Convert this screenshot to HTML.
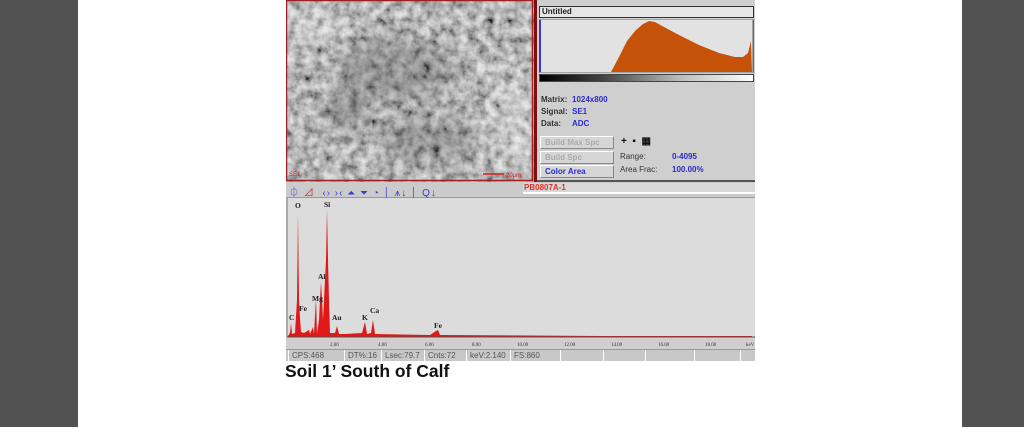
<!DOCTYPE html>
<html><head><meta charset="utf-8"><style>
*{margin:0;padding:0;box-sizing:border-box}
body{width:1024px;height:427px;background:#fff;position:relative;overflow:hidden;font-family:"Liberation Sans",Arial,sans-serif}
.side{position:absolute;top:0;height:427px;background:#525252}
.a{position:absolute}
.lbl{font-size:8px;font-weight:bold;color:#333;position:absolute}
.val{font-size:8px;font-weight:bold;color:#2b2bd0;position:absolute}
.btn{position:absolute;left:540px;width:74px;height:13px;background:#d6d6d6;border:1px solid #fff;border-right-color:#888;border-bottom-color:#888;font-size:8px;font-weight:bold;color:#aaa;padding-left:4px;line-height:11px}
.st{position:absolute;top:350px;height:11px;font-size:8px;color:#555;border-left:1px solid #fff;padding-left:3px;line-height:11px}
</style></head><body>
<div class="side" style="left:0;width:78px"></div>
<div class="side" style="left:962px;width:62px"></div>

<div class="a" style="left:286px;top:0;width:469px;height:361px;background:#cfcfcf"></div>

<svg class="a" style="left:286px;top:0" width="248" height="182" viewBox="0 0 248 182">
<defs>
<filter id="t2" x="0" y="0" width="100%" height="100%">
<feTurbulence type="fractalNoise" baseFrequency="0.11" numOctaves="5" seed="3"/>
<feColorMatrix type="matrix" values="1.5 0 0 0 -0.2 1.5 0 0 0 -0.2 1.5 0 0 0 -0.2 0 0 0 0 1"/>
</filter>
<filter id="b"><feGaussianBlur stdDeviation="10"/></filter>
</defs>
<rect width="248" height="182" fill="#8e8e8e"/>
<rect width="248" height="182" filter="url(#t2)" opacity="0.75"/>
<g filter="url(#b)" fill="#444" opacity="0.3">
<ellipse cx="110" cy="70" rx="60" ry="30"/><ellipse cx="140" cy="140" rx="50" ry="22"/><ellipse cx="60" cy="110" rx="25" ry="20"/>
</g>
<g filter="url(#b)" fill="#fff" opacity="0.3">
<ellipse cx="225" cy="120" rx="20" ry="50"/><ellipse cx="30" cy="30" rx="25" ry="18"/>
</g>
<rect x="0.5" y="0.5" width="246" height="180" fill="none" stroke="#a02020" stroke-width="1.5"/>
<text x="3" y="176" font-size="6" fill="#d02020" font-family="Liberation Sans">SE1</text>
<line x1="197" y1="174" x2="218" y2="174" stroke="#d02020" stroke-width="1.5"/>
<text x="220" y="177" font-size="6" fill="#d02020" font-family="Liberation Sans">20μm</text>
</svg>
<div class="a" style="left:534px;top:0;width:3px;height:182px;background:#7a1010"></div>

<div class="a" style="left:539px;top:6px;width:215px;height:12px;background:#e6e6e6;border:1px solid #333;font-size:8px;font-weight:bold;padding-left:2px;line-height:10px;color:#222">Untitled</div>
<svg class="a" style="left:539px;top:19px" width="215" height="54" viewBox="0 0 215 54">
<rect width="215" height="54" fill="#e2e2e2" stroke="#666"/>
<line x1="1" y1="1" x2="1" y2="53" stroke="#3a3ad0" stroke-width="2"/>
<path d="M72 53 L80 38 L88 22 L96 12 L104 5 L110 2 L116 3 L125 8 L140 16 L160 26 L180 34 L196 38 L204 38 L209 34 L212 22 L213 53 Z" fill="#c65209"/>
<line x1="214" y1="1" x2="214" y2="53" stroke="#666"/>
</svg>
<div class="a" style="left:539px;top:74px;width:215px;height:8px;border:1px solid #444;background:linear-gradient(90deg,#000,#444 30%,#bbb 65%,#fff)"></div>
<div class="lbl" style="left:541px;top:95px">Matrix:</div><div class="val" style="left:572px;top:95px">1024x800</div>
<div class="lbl" style="left:541px;top:107px">Signal:</div><div class="val" style="left:572px;top:107px">SE1</div>
<div class="lbl" style="left:541px;top:119px">Data:</div><div class="val" style="left:572px;top:119px">ADC</div>
<div class="btn" style="top:136px">Build Max Spc</div>
<div class="btn" style="top:151px">Build Spc</div>
<div class="btn" style="top:165px;color:#2b2bd0">Color Area</div>
<div class="a" style="left:621px;top:136px;font-size:10px;font-weight:bold;color:#111">+ &nbsp;▪ &nbsp;▦</div>
<div class="lbl" style="left:620px;top:152px;font-weight:normal">Range:</div><div class="val" style="left:672px;top:152px">0-4095</div>
<div class="lbl" style="left:620px;top:165px;font-weight:normal">Area Frac:</div><div class="val" style="left:672px;top:165px">100.00%</div>
<div class="a" style="left:537px;top:180px;width:218px;height:2px;background:#555"></div>

<div class="a" style="left:286px;top:182px;width:469px;height:16px;background:#cbcbcb;border-bottom:1px solid #999"></div>
<div class="a" style="left:289px;top:184px;font-size:10px;color:#3a3ad0;letter-spacing:1px;white-space:nowrap">⏀ <span style="color:#b03030">⊿</span>&nbsp; ‹› ›‹ ⏶ ⏷ ◔ │ ⩚↓ │ Q↓</div>
<div class="a" style="left:523px;top:183px;width:232px;height:11px;background:#d8d8d8;border-bottom:2px solid #fff;font-size:8px;font-weight:bold;color:#e03030;line-height:10px;padding-left:1px">PB0807A-1</div>

<div class="a" style="left:286px;top:198px;width:469px;height:139px;background:#dcdcdc;border-left:2px solid #aaa"></div>
<svg class="a" style="left:286px;top:198px" width="469" height="152" viewBox="286 198 469 152">
<path d="M288 336 L290 333 L291 323 L292 334 L295 333 L297 300 L298 213 L299 300 L300 318 L301 332 L304 333 L309 330 L310 334 L313 327 L314 334 L316 298 L317 334 L319 320 L320 300 L321 282 L322 300 L323 320 L324 300 L326 260 L327 209 L328 260 L329 300 L330 333 L335 333 L337 326 L339 334 L345 334 L362 333 L365 322 L367 334 L371 333 L373 320 L375 334 L430 335 L436 331 L438 330 L440 335 L600 336 L752 336 L752 337 L288 337 Z" fill="#e01818"/>
<line x1="287" y1="337" x2="755" y2="337" stroke="#555" stroke-width="1"/>
<g font-family="Liberation Serif" font-size="7.5" fill="#222" font-weight="bold">
<text x="295" y="208">O</text><text x="324" y="207">Si</text><text x="318" y="279">Al</text>
<text x="312" y="301">Mg</text><text x="289" y="320">C</text><text x="299" y="311">Fe</text>
<text x="332" y="320">Au</text><text x="362" y="320">K</text><text x="370" y="313">Ca</text>
<text x="434" y="328">Fe</text></g>
<g font-family="Liberation Serif" font-size="5" fill="#333">
<text x="330" y="346">2.00</text><text x="378" y="346">4.00</text><text x="425" y="346">6.00</text>
<text x="472" y="346">8.00</text><text x="517" y="346">10.00</text><text x="564" y="346">12.00</text>
<text x="611" y="346">14.00</text><text x="658" y="346">16.00</text><text x="705" y="346">18.00</text>
<text x="746" y="346">keV</text></g>
</svg>

<div class="a" style="left:286px;top:349px;width:469px;height:12px;background:#c8c8c8;border-top:1px solid #999"></div>
<div class="st" style="left:288px">CPS:468</div>
<div class="st" style="left:344px">DT%:16</div>
<div class="st" style="left:381px">Lsec:79.7</div>
<div class="st" style="left:424px">Cnts:72</div>
<div class="st" style="left:466px">keV:2.140</div>
<div class="st" style="left:510px">FS:860</div>
<div class="st" style="left:560px"></div><div class="st" style="left:603px"></div><div class="st" style="left:645px"></div><div class="st" style="left:694px"></div><div class="st" style="left:740px"></div>

<div class="a" style="left:285px;top:361px;font-size:17.5px;font-weight:bold;color:#111">Soil 1’ South of Calf</div>
</body></html>
